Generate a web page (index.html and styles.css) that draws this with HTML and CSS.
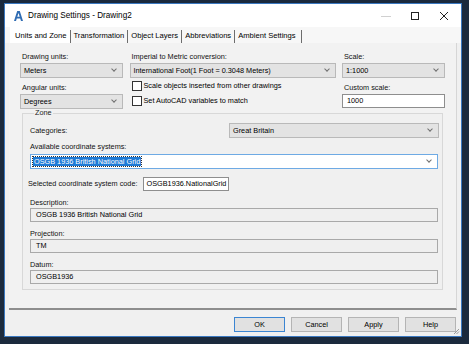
FILE: index.html
```html
<!DOCTYPE html>
<html lang="en">
<head>
	<meta charset="UTF-8">
	<title>Drawing Settings - Drawing2</title>
	<link rel="stylesheet" href="styles.css">
</head>
<body>
	<div class="window">
		<div class="titlebar">
			<svg class="app-icon" width="9" height="10" viewBox="0 0 9 10">
				<path d="M3.2 0h2.6L9 10H7L6.2 7.4H2.8L2 10H0z M3.3 5.7h2.4L4.5 1.9z" fill="#2f6cb3" fill-rule="evenodd"/>
			</svg>
			<div class="title">Drawing Settings - Drawing2</div>
			<div class="controls">
				<svg width="10" height="10" viewBox="0 0 10 10"><path d="M0 5.5h10" stroke="#d0d0d0" stroke-width="1"/></svg>
				<svg width="10" height="10" viewBox="0 0 10 10"><rect x="1.5" y="1.5" width="7" height="7" fill="none" stroke="#222" stroke-width="1"/></svg>
				<svg width="10" height="10" viewBox="0 0 10 10"><path d="M1 1l8 8M9 1l-8 8" stroke="#222" stroke-width="1"/></svg>
			</div>
		</div>

		<div class="tabs">
			<div class="tab active">Units and Zone</div>
			<div class="tab">Transformation</div>
			<div class="tab">Object Layers</div>
			<div class="tab">Abbreviations</div>
			<div class="tab">Ambient Settings</div>
		</div>

		<div class="page">
			<div class="top-grid">
				<div class="col1">
					<div class="lbl">Drawing units:</div>
					<div class="select"><span>Meters</span><i class="chev"></i></div>
					<div class="lbl gap">Angular units:</div>
					<div class="select"><span>Degrees</span><i class="chev"></i></div>
				</div>
				<div class="col2">
					<div class="lbl">Imperial to Metric conversion:</div>
					<div class="select"><span>International Foot(1 Foot = 0.3048 Meters)</span><i class="chev"></i></div>
					<div class="checks">
						<div class="check"><span class="box"></span>Scale objects inserted from other drawings</div>
						<div class="check"><span class="box"></span>Set AutoCAD variables to match</div>
					</div>
				</div>
				<div class="col3">
					<div class="lbl">Scale:</div>
					<div class="select"><span>1:1000</span><i class="chev"></i></div>
					<div class="lbl gap">Custom scale:</div>
					<div class="input">1000</div>
				</div>
			</div>

			<fieldset class="zone">
				<legend>Zone</legend>
				<div class="cat-row">
					<div class="lbl">Categories:</div>
					<div class="select cat"><span>Great Britain</span><i class="chev"></i></div>
				</div>
				<div class="lbl sp">Available coordinate systems:</div>
				<div class="select open"><span class="hl">OSGB 1936 British National Grid</span><i class="chev"></i></div>

				<div class="code-row">
					<div class="lbl">Selected coordinate system code:</div>
					<div class="input code">OSGB1936.NationalGrid</div>
				</div>

				<div class="lbl sp2">Description:</div>
				<div class="ro">OSGB 1936 British National Grid</div>
				<div class="lbl sp3">Projection:</div>
				<div class="ro">TM</div>
				<div class="lbl sp3">Datum:</div>
				<div class="ro">OSGB1936</div>
			</fieldset>
		</div>

		<div class="footer">
			<div class="btn default">OK</div>
			<div class="btn">Cancel</div>
			<div class="btn">Apply</div>
			<div class="btn">Help</div>
		</div>

		<svg class="grip" width="7" height="7" viewBox="0 0 7 7">
			<path d="M6 1L1 6M6 3.5L3.5 6" stroke="#9a9a9a" stroke-width="1"/>
		</svg>
	</div>
</body>
</html>
```

FILE: styles.css
```css
*{
	padding:0;
	margin:0;
	box-sizing: border-box;
}
body{
	background: #1b2a3d;
	font-family: "Liberation Sans", Arial, sans-serif;
	font-size: 7.3px;
	color: #000;
	padding: 3px 0 0 4px;
}
.window{
	position: relative;
	width: 458px;
	height: 334px;
	background: #f0f0f0;
	border: 1px solid #3a78c0;
	display: flex;
	flex-direction: column;
}
.titlebar{
	height: 23px;
	flex: none;
	background: #fff;
	display: flex;
	align-items: center;
	padding-left: 9px;
}
.app-icon{
	margin-right: 5px;
}
.title{
	font-size: 8.2px;
	flex: 1;
}
.controls{
	display: flex;
	gap: 19px;
	padding-right: 12px;
}
.tabs{
	height: 16px;
	flex: none;
	display: flex;
	align-items: flex-end;
	padding-left: 5px;
	background: #f7f7f7;
	font-size: 7.6px;
}
.tab{
	height: 13px;
	line-height: 12px;
	padding: 0 3px 0 3px;
	border-left: 1px solid #6d6d6d;
	white-space: nowrap;
}
.tab.active{
	border-left: none;
	height: 16px;
	line-height: 17px;
	padding: 0 3px 0 5px;
	background: #fff;
}
.tab:last-child{
	border-right: 1px solid #6d6d6d;
	padding-right: 5px;
}
.page{
	flex: none;
	height: 267px;
	margin-left: 4px;
	width: 448px;
	background: #f2f2f2;
	border-right: 1px solid #d6d6d6;
	border-bottom: 2px solid #8e8e8e;
	padding: 9px 10px 0 11px;
}
.top-grid{
	display: grid;
	grid-template-columns: 103px 206px 103px;
	column-gap: 6.5px;
	height: 56px;
}
.lbl{
	line-height: 10px;
	color: #111;
	white-space: nowrap;
}
.top-grid .lbl{
	padding-left: 2px;
}
.top-grid .select, .top-grid .input{
	margin-top: 1px;
}
.top-grid .gap{
	margin-top: 5px;
}
.select{
	height: 15px;
	background: #e3e3e3;
	border: 1px solid #b9b9b9;
	display: flex;
	align-items: center;
	justify-content: space-between;
	padding: 0 6px 0 3px;
	white-space: nowrap;
	overflow: hidden;
}
.chev{
	width: 4px;
	height: 4px;
	border-right: 1px solid #707070;
	border-bottom: 1px solid #707070;
	transform: rotate(45deg);
	margin-top: -3px;
	flex: none;
}
.input{
	height: 14px;
	background: #fff;
	border: 1px solid #8e8e8e;
	padding: 0 4px;
	line-height: 12px;
}
.checks{
	margin-top: 3px;
	padding-left: 2px;
	display: flex;
	flex-direction: column;
	gap: 5px;
}
.check{
	display: flex;
	align-items: center;
	line-height: 10px;
	white-space: nowrap;
}
.box{
	width: 10px;
	height: 10px;
	border: 1px solid #333;
	background: #fff;
	margin-right: 2px;
	flex: none;
}
.zone{
	margin: 0 3px 0 2px;
	border: 1px solid #d8d8d8;
	padding: 5px 4px 5px 7px;
	background: #f0f0f0;
}
.zone legend{
	line-height: 10px;
	padding: 0 1px;
	margin-left: 4px;
	color: #222;
}
.cat-row{
	display: flex;
	justify-content: space-between;
	align-items: center;
	height: 15px;
}
.cat{
	width: 210px;
	margin-right: -1px;
}
.sp{
	margin-top: 4px;
	margin-bottom: 2px;
}
.select.open{
	background: #fff;
	border-color: #6eaae4;
	padding-left: 2px;
}
.hl{
	background: #1e7ad6;
	color: #fff;
	outline: 1px dotted #333;
	padding: 0 1px;
	line-height: 9px;
}
.code-row{
	display: flex;
	align-items: center;
	gap: 5px;
	margin-top: 8px;
	margin-left: -2px;
}
.code{
	width: 86px;
	padding: 0 3px;
}
.sp2{
	margin-top: 7px;
}
.sp3{
	margin-top: 7px;
}
.ro{
	height: 14px;
	border: 1px solid #a9a9a9;
	background: #efefef;
	padding: 0 5px;
	line-height: 12px;
}
.footer{
	flex: 1;
	display: flex;
	justify-content: flex-end;
	align-items: flex-start;
	gap: 6px;
	padding: 7px 5px 0 0;
}
.btn{
	width: 51px;
	height: 15px;
	background: #e1e1e1;
	border: 1px solid #b4b4b4;
	text-align: center;
	line-height: 13px;
}
.btn.default{
	border-color: #3b85d2;
}
.grip{
	position: absolute;
	right: 1px;
	bottom: 1px;
}
```
